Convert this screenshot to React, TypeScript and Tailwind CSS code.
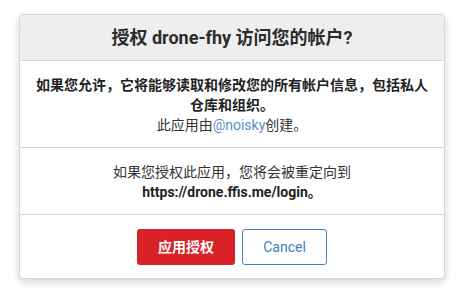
export default function App() {
  return (
    <div className="min-h-screen bg-white pt-[14px] font-['Roboto','Noto_Sans_CJK_SC',sans-serif] text-[#333]">
      <div className="mx-auto w-[426px] overflow-hidden rounded-[3px] border border-[#d8d8d8] bg-white shadow-[0_3px_8px_rgba(0,0,0,0.18)]">
        {/* header */}
        <div className="flex h-[46px] items-center justify-center border-b border-[#d6d6d6] bg-[#eeeeee]">
          <h1 className="text-[18px] font-bold leading-none text-[#2b2b2b]">授权 drone-fhy 访问您的帐户?</h1>
        </div>

        {/* scope */}
        <div className="border-b border-[#d6d6d6] px-4 pb-[12px] pt-[14px] text-center text-[14px] leading-[20px]">
          <p className="font-bold text-[#222]">如果您允许，它将能够读取和修改您的所有帐户信息，包括私人仓库和组织。</p>
          <p className="text-[#333]">
            此应用由<a className="text-[#5b8cc9]">@noisky</a>创建。
          </p>
        </div>

        {/* redirect */}
        <div className="border-b border-[#d6d6d6] px-4 pb-[12px] pt-[14px] text-center text-[14px] leading-[20px]">
          <p className="text-[#333]">如果您授权此应用，您将会被重定向到</p>
          <p className="font-bold text-[#222]">https://drone.ffis.me/login。</p>
        </div>

        {/* actions */}
        <div className="flex justify-center gap-[7px] pb-[13px] pt-[14px]">
          <button className="h-[36px] w-[98px] rounded-[3px] bg-[#d92228] text-[14px] font-bold text-white">应用授权</button>
          <button className="h-[36px] w-[85px] rounded-[3px] border border-[#3d85c6] bg-white text-[14px] text-[#3d7fc1]">Cancel</button>
        </div>
      </div>
    </div>
  );
}
